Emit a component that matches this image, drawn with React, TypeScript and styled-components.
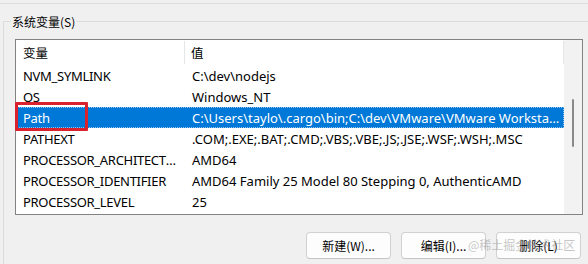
import React from "react";
import styled, { createGlobalStyle } from "styled-components";

const Global = createGlobalStyle`
  html, body { margin: 0; padding: 0; background: #f0f0f0; }
  body { font-family: "Noto Sans", "Noto Sans CJK SC", sans-serif; font-size: 13px; color: #000; }
`;

const Page = styled.div`
  position: relative;
  width: 588px;
  height: 264px;
  overflow: hidden;
  background: #f0f0f0;
`;

const TopRule = styled.div`
  height: 3px;
  border-bottom: 1px solid #dcdcdc;
`;

const Group = styled.section`
  margin: 17px 0 0 3px;
  height: 260px;
  border-top: 1px solid #dcdcdc;
  border-left: 1px solid #dcdcdc;
`;

const Legend = styled.div`
  width: fit-content;
  margin: -10px 0 0 7px;
  padding: 0 1px;
  background: #f0f0f0;
  font-size: 12px;
  line-height: 20px;
  font-family: "Noto Sans CJK SC", "Noto Sans", sans-serif;
`;

const Content = styled.div`
  width: 568px;
  margin: 7px 0 0 11px;
`;

const ListBox = styled.div`
  position: relative;
  height: 176px;
  box-sizing: border-box;
  border: 1px solid #838383;
  background: #fff;
  display: flex;
`;

const Table = styled.div`
  flex: 1;
  min-width: 0;
  display: flex;
  flex-direction: column;
`;

const HeaderRow = styled.div`
  display: flex;
  height: 25px;
  align-items: stretch;
`;

const HeaderCell = styled.div<{ $w?: number }>`
  ${(p) => (p.$w ? `width: ${p.$w}px;` : "flex: 1;")}
  box-sizing: border-box;
  padding-left: ${(p) => (p.$w ? 7 : 6)}px;
  display: flex;
  align-items: center;
  font-family: "Noto Sans CJK SC", "Noto Sans", sans-serif;
  font-size: 12.5px;
  margin: 1px 0 1px;
  border-right: 1px solid #e6e6e6;
`;

const Row = styled.div<{ $selected?: boolean }>`
  display: flex;
  height: 21px;
  align-items: center;
  background: ${(p) => (p.$selected ? "#0078d7" : "transparent")};
  color: ${(p) => (p.$selected ? "#fff" : "#000")};
  ${(p) => (p.$selected ? "outline: 1px dotted rgba(255,255,255,0.55); outline-offset: -1px;" : "")}
`;

const Cell = styled.div<{ $w?: number }>`
  ${(p) => (p.$w ? `width: ${p.$w}px; letter-spacing: -0.3px;` : "flex: 1;")}
  box-sizing: border-box;
  padding-left: 7px;
  padding-right: ${(p) => (p.$w ? 4 : 1)}px;
  white-space: nowrap;
  overflow: hidden;
  text-overflow: ellipsis;
`;

const Scrollbar = styled.div`
  width: 18px;
  background: #f2f2f2;
  display: flex;
  justify-content: center;
`;

const Thumb = styled.div`
  width: 2px;
  height: 48px;
  background: #8a8a8a;
  border-radius: 1px;
`;

const Highlight = styled.div`
  position: absolute;
  left: -1px;
  top: 62px;
  width: 73px;
  height: 29px;
  box-sizing: border-box;
  border: 3px solid #d9222d;
  border-radius: 1px;
  pointer-events: none;
`;

const ButtonRow = styled.div`
  display: flex;
  justify-content: flex-end;
  gap: 10px;
  margin-top: 17px;
  padding-right: 2px;
`;

const Button = styled.button`
  width: 85px;
  height: 27px;
  box-sizing: border-box;
  border: 1px solid #d1d1d1;
  border-bottom-color: #c4c4c4;
  border-radius: 4px;
  background: #fdfdfd;
  font-family: "Noto Sans CJK SC", "Noto Sans", sans-serif;
  font-size: 12px;
  color: #000;
  padding: 0;
`;

const Watermark = styled.div`
  position: absolute;
  left: 468px;
  top: 236px;
  font-family: "Noto Sans CJK SC", sans-serif;
  font-size: 12px;
  line-height: 18px;
  color: rgba(150, 150, 150, 0.55);
  pointer-events: none;
`;

const rows: [string, string][] = [
  ["NVM_SYMLINK", "C:\\dev\\nodejs"],
  ["OS", "Windows_NT"],
  ["Path", "C:\\Users\\taylo\\.cargo\\bin;C:\\dev\\VMware\\VMware Workstation\\bin\\;C:\\Windows\\system32"],
  ["PATHEXT", ".COM;.EXE;.BAT;.CMD;.VBS;.VBE;.JS;.JSE;.WSF;.WSH;.MSC"],
  ["PROCESSOR_ARCHITECTURE", "AMD64"],
  ["PROCESSOR_IDENTIFIER", "AMD64 Family 25 Model 80 Stepping 0, AuthenticAMD"],
  ["PROCESSOR_LEVEL", "25"],
];

const COL1 = 169;

export default function App() {
  return (
    <Page>
      <Global />
      <TopRule />
      <Group>
        <Legend>系统变量(S)</Legend>
        <Content>
          <ListBox>
            <Table>
              <HeaderRow>
                <HeaderCell $w={COL1}>变量</HeaderCell>
                <HeaderCell>值</HeaderCell>
              </HeaderRow>
              {rows.map(([k, v]) => (
                <Row key={k} $selected={k === "Path"}>
                  <Cell $w={COL1}>{k}</Cell>
                  <Cell>{v}</Cell>
                </Row>
              ))}
            </Table>
            <Scrollbar>
              <Thumb style={{ marginTop: 59 }} />
            </Scrollbar>
            <Highlight />
          </ListBox>
          <ButtonRow>
            <Button>新建(W)...</Button>
            <Button>编辑(I)...</Button>
            <Button>删除(L)</Button>
          </ButtonRow>
        </Content>
      </Group>
      <Watermark>@稀土掘金技术社区</Watermark>
    </Page>
  );
}
